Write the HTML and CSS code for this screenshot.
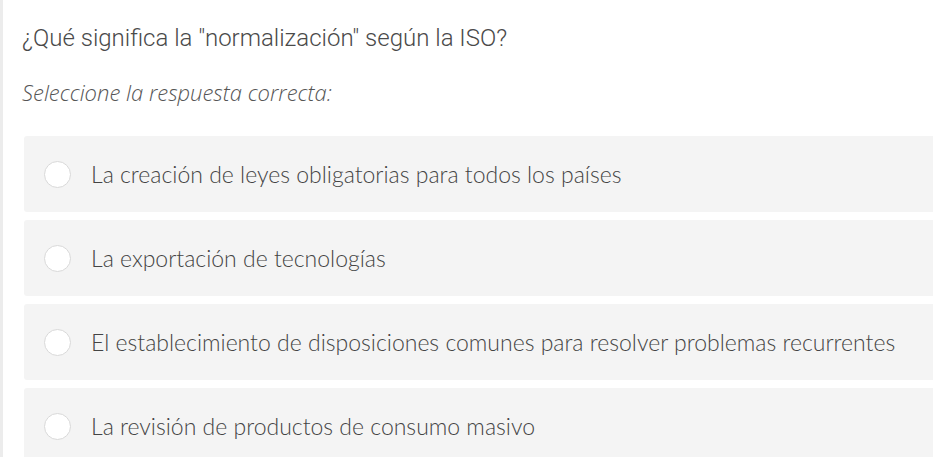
FILE: index.html
```html
<!DOCTYPE html>
<html lang="es">
<head>
<meta charset="utf-8">
<link rel="stylesheet" href="styles.css">
</head>
<body>
<div class="panel">
  <p class="question">¿Qué significa la "normalización" según la ISO?</p>
  <p class="hint">Seleccione la respuesta correcta:</p>
  <div class="options">
    <label class="option"><span class="radio"></span><span class="text">La creación de leyes obligatorias para todos los países</span></label>
    <label class="option"><span class="radio"></span><span class="text">La exportación de tecnologías</span></label>
    <label class="option"><span class="radio"></span><span class="text">El establecimiento de disposiciones comunes para resolver problemas recurrentes</span></label>
    <label class="option"><span class="radio"></span><span class="text">La revisión de productos de consumo masivo</span></label>
  </div>
</div>
</body>
</html>
```
FILE: styles.css
```css
html, body {
  margin: 0;
  padding: 0;
  background: #fff;
  overflow: hidden;
}
.panel {
  border-left: 3px solid #ececec;
  padding: 23px 0 0 19px;
  min-height: 457px;
  box-sizing: border-box;
  color: #444;
}
.question {
  margin: 0;
  font-family: Roboto, "Liberation Sans", sans-serif;
  font-weight: 300;
  font-size: 24px;
  line-height: 30px;
  color: #4a4a4a;
}
.hint {
  margin: 24px 0 0;
  font-family: "Open Sans", sans-serif;
  font-style: italic;
  font-weight: 300;
  font-size: 22px;
  line-height: 30px;
  color: #555;
}
.options {
  margin: 29px -10px 0 2px;
  display: flex;
  flex-direction: column;
  gap: 8px;
}
.option {
  display: flex;
  align-items: center;
  height: 76px;
  background: #f4f4f4;
  border-radius: 3px;
  padding-left: 20px;
  box-sizing: border-box;
}
.radio {
  width: 25px;
  height: 25px;
  border: 1px solid #d9d9d9;
  border-radius: 50%;
  background: #fff;
  flex: none;
}
.text {
  margin-left: 20px;
  font-family: Lato, "Open Sans", sans-serif;
  font-weight: 300;
  font-size: 23px;
  color: #444;
}
```
